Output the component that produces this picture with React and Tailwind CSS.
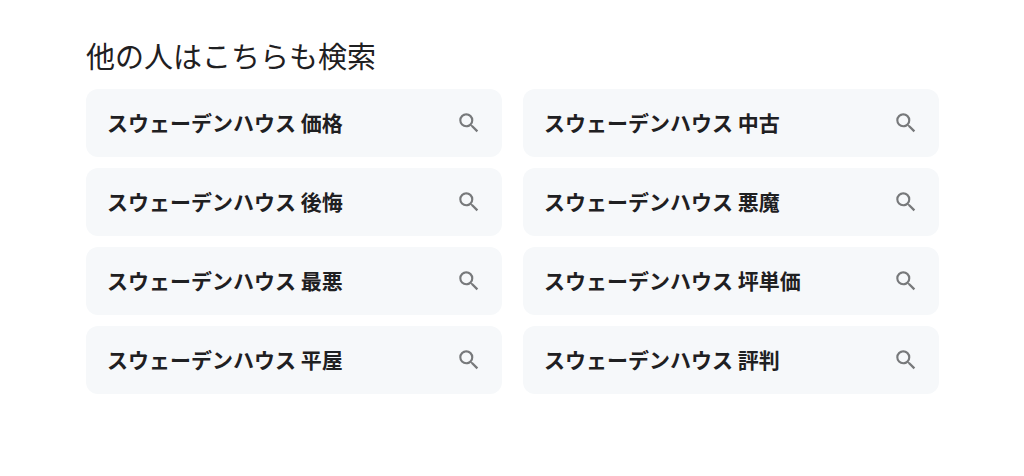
const searches = [
  'スウェーデンハウス 価格',
  'スウェーデンハウス 中古',
  'スウェーデンハウス 後悔',
  'スウェーデンハウス 悪魔',
  'スウェーデンハウス 最悪',
  'スウェーデンハウス 坪単価',
  'スウェーデンハウス 平屋',
  'スウェーデンハウス 評判',
];

function SearchIcon() {
  return (
    <svg viewBox="0 0 24 24" className="size-[26px] shrink-0 fill-[#77797b]" aria-hidden="true">
      <path d="M15.5 14h-.79l-.28-.27A6.471 6.471 0 0 0 16 9.5 6.5 6.5 0 1 0 9.5 16c1.61 0 3.09-.59 4.23-1.57l.27.28v.79l5 4.99L20.49 19l-4.99-5zm-6 0C7.01 14 5 11.99 5 9.5S7.01 5 9.5 5 14 7.01 14 9.5 11.99 14 9.5 14z" />
    </svg>
  );
}

export default function App() {
  return (
    <main lang="ja" className="bg-white pt-[35px] pr-[85px] pb-20 pl-[86px] font-['Noto_Sans_CJK_JP',sans-serif] text-[#1f2022]">
      <h1 className="text-[29px] leading-10 font-normal">他の人はこちらも検索</h1>
      <ul className="mt-[14px] grid grid-cols-2 gap-x-[21px] gap-y-[11px]">
        {searches.map((text) => (
          <li key={text}>
            <a
              href="#"
              className="flex h-[68px] items-center justify-between rounded-xl bg-[#f6f8fa] pr-5 pl-[21px] text-[21px] leading-8 font-bold"
            >
              <span className="pb-0.5">{text}</span>
              <SearchIcon />
            </a>
          </li>
        ))}
      </ul>
    </main>
  );
}
